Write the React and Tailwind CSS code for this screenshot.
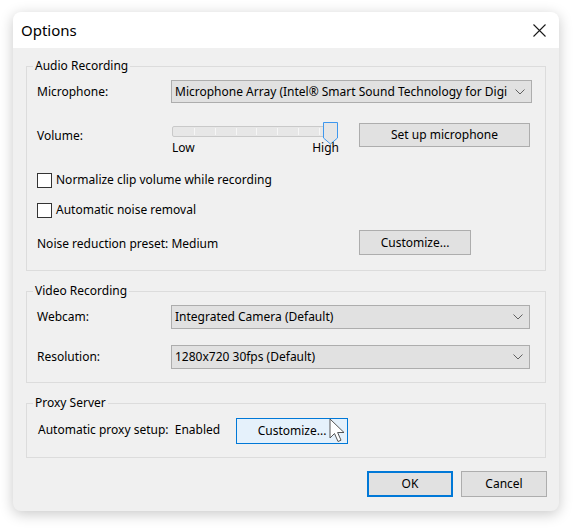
import React from 'react'

const FONT = { fontFamily: '"Noto Sans", "Open Sans", sans-serif' }

function Chevron() {
  return (
    <svg width="10" height="6" viewBox="0 0 10 6" className="shrink-0">
      <path d="M0.5 0.5 L5 5 L9.5 0.5" fill="none" stroke="#606060" strokeWidth="1" />
    </svg>
  )
}

function Select({ value, className = '' }) {
  return (
    <div className={`flex items-center bg-[#e1e1e1] border border-[#adadad] pl-[3px] pr-[6px] ${className}`}>
      <span className="flex-1 overflow-hidden whitespace-nowrap text-clip">{value}</span>
      <div className="w-[18px] flex justify-end pl-[2px]">
        <Chevron />
      </div>
    </div>
  )
}

function Button({ children, className = '' }) {
  return (
    <div className={`flex items-center justify-center bg-[#e1e1e1] border border-[#adadad] ${className}`}>
      {children}
    </div>
  )
}

function Group({ title, children, className = '' }) {
  return (
    <fieldset className={`border border-[#dcdcdc] px-[10px] ${className}`}>
      <legend className="-ml-[4px] px-[2px] leading-[16px]">{title}</legend>
      {children}
    </fieldset>
  )
}

function Checkbox({ label }) {
  return (
    <div className="flex items-center gap-[4px] h-[16px]">
      <div className="w-[15px] h-[15px] border border-[#333333] bg-white" />
      <span>{label}</span>
    </div>
  )
}

function Slider() {
  const ticks = [21, 42, 63, 83, 104, 125, 146]
  return (
    <div className="w-[167px]">
      <div className="relative h-[18px]">
        <div className="absolute left-0 top-[4px] w-[158px] h-[11px] rounded-[2px] border border-[#c9c9c9] bg-[#e7e7e7]">
          {ticks.map((t) => (
            <div key={t} className="absolute top-[1px] bottom-[1px] w-px bg-[#f6f6f6]" style={{ left: t }} />
          ))}
        </div>
        <svg className="absolute right-[1px] top-0" width="15" height="23" viewBox="0 0 15 23">
          <path d="M0.5 0.5 H14.5 V16 L7.5 22 L0.5 16 Z" fill="#e6e6e6" stroke="#3e97ee" strokeWidth="1" />
        </svg>
      </div>
      <div className="flex justify-between leading-[16px]">
        <span>Low</span>
        <span className="relative">High</span>
      </div>
    </div>
  )
}

function Cursor() {
  return (
    <svg className="absolute left-[93px] top-[0px]" width="18" height="26" viewBox="0 0 18 26">
      <path
        d="M1 1 L1 20 L5.5 15.5 L9 23.5 L12 22.2 L8.6 14.5 L15 14.5 Z"
        fill="#ffffff"
        stroke="#555555"
        strokeWidth="1"
        strokeLinejoin="round"
      />
    </svg>
  )
}

export default function App() {
  return (
    <div className="w-[575px] h-[531px] bg-white pl-[13px] pt-[12px] text-[12px] text-black" style={FONT}>
      <div className="w-[546px] h-[499px] rounded-[8px] overflow-hidden flex flex-col shadow-[0_3px_14px_rgba(0,0,0,0.22)] bg-[#f0f0f0]">
        {/* Title bar */}
        <div className="h-[36px] bg-white flex items-center justify-between pl-[8px] pr-[13px] shrink-0">
          <span className="text-[15px]">Options</span>
          <svg width="13" height="13" viewBox="0 0 13 13">
            <path d="M0.5 0.5 L12.5 12.5 M12.5 0.5 L0.5 12.5" stroke="#1a1a1a" strokeWidth="1.1" />
          </svg>
        </div>

        {/* Body */}
        <div className="flex-1 flex flex-col pt-[10px] pl-[13px] pr-[13px]">
          <Group title="Audio Recording" className="pb-[15px]">
            <div className="flex items-center mt-[6px] h-[23px]">
              <span className="w-[134px]">Microphone:</span>
              <Select
                value="Microphone Array (Intel® Smart Sound Technology for Digital Microphones)"
                className="w-[361px] h-[23px]"
              />
            </div>
            <div className="flex items-start mt-[19px] h-[34px]">
              <span className="w-[135px] pt-[5px]">Volume:</span>
              <Slider />
              <Button className="ml-[20px] mt-[1px] w-[171px] h-[24px]">Set up microphone</Button>
            </div>
            <div className="mt-[16px]">
              <Checkbox label="Normalize clip volume while recording" />
            </div>
            <div className="mt-[14px]">
              <Checkbox label="Automatic noise removal" />
            </div>
            <div className="flex items-center mt-[12px] h-[25px]">
              <span className="w-[322px] pt-[2px]">Noise reduction preset: Medium</span>
              <Button className="w-[112px] h-[25px]">Customize...</Button>
            </div>
          </Group>

          <Group title="Video Recording" className="mt-[12px] pb-[13px]">
            <div className="flex items-center mt-[6px]">
              <span className="w-[134px]">Webcam:</span>
              <Select value="Integrated Camera (Default)" className="w-[359px] h-[24px]" />
            </div>
            <div className="flex items-center mt-[16px]">
              <span className="w-[134px]">Resolution:</span>
              <Select value="1280x720 30fps (Default)" className="w-[359px] h-[24px]" />
            </div>
          </Group>

          <Group title="Proxy Server" className="mt-[12px] pb-[13px]">
            <div className="flex items-center mt-[7px] h-[26px]">
              <span className="w-[199px] pl-[1px] -mt-[2px]">
                Automatic proxy setup:&nbsp; Enabled
              </span>
              <div className="relative">
                <div className="flex items-center justify-center w-[112px] h-[26px] bg-[#e5f1fb] border border-[#0078d7]">
                  Customize...
                </div>
                <Cursor />
              </div>
            </div>
          </Group>

          <div className="flex justify-end gap-[8px] mt-[13px] -mr-[1px]">
            <div className="flex items-center justify-center w-[86px] h-[26px] bg-[#e1e1e1] border-2 border-[#0078d7]">
              OK
            </div>
            <Button className="w-[86px] h-[26px]">Cancel</Button>
          </div>
        </div>
      </div>
    </div>
  )
}
